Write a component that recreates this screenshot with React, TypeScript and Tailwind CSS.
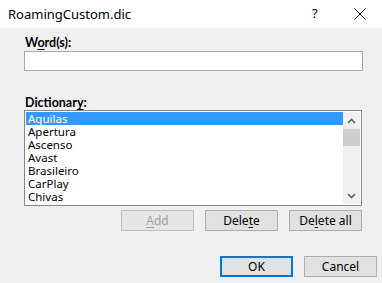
import React from "react";

const font = { fontFamily: '"Noto Sans", "Open Sans", sans-serif' };
const boldFont = { fontFamily: 'Lato, "Noto Sans", sans-serif' };

function Btn({ children, disabled, primary, className = "" }: { children: React.ReactNode; disabled?: boolean; primary?: boolean; className?: string }) {
  return (
    <div
      className={`h-[21px] w-[73px] flex items-center justify-center text-[12px] leading-none ${
        primary
          ? "border-2 border-[#0078d7] bg-[#e1e1e1] text-black"
          : disabled
          ? "border border-[#bfbfbf] bg-[#e6e6e6] text-[#a0a0a0]"
          : "border border-[#adadad] bg-[#e1e1e1] text-black"
      } ${className}`}
    >
      {children}
    </div>
  );
}

const items = ["Aguilas", "Apertura", "Ascenso", "Avast", "Brasileiro", "CarPlay", "Chivas"];

export default function App() {
  return (
    <div className="w-[382px] h-[283px] bg-[#f0f0f0] flex flex-col overflow-hidden text-black" style={font}>
      <div className="h-[28px] bg-white flex items-center pl-[8px] relative shrink-0">
        <span className="text-[13px] leading-none">RoamingCustom.dic</span>
        <span className="absolute left-[312px] top-[7px] text-[13px] leading-none">?</span>
        <svg className="absolute left-[354px] top-[8px]" width="12" height="12" viewBox="0 0 12 12">
          <path d="M0.5 0.5 L11.5 11.5 M11.5 0.5 L0.5 11.5" stroke="#111" strokeWidth="1" />
        </svg>
      </div>
      <div className="flex flex-col pl-[24px]">
        <div className="mt-[7px] h-[16px] text-[12.5px] font-bold leading-[16px] pl-[1px]" style={boldFont}>
          W<span className="underline underline-offset-2">o</span>rd(s):
        </div>
        <div className="h-[20px] w-[339px] border border-[#a8a8a8] bg-white" />
        <div className="mt-[24px] h-[15px] text-[12.5px] font-bold leading-[15px] pl-[1px]" style={boldFont}>
          Dictionar<span className="underline underline-offset-2">y</span>:
        </div>
        <div className="h-[96px] w-[338px] border border-[#828790] bg-white flex p-[1px]">
          <div className="flex-1 flex flex-col">
            {items.map((it, i) => (
              <div
                key={it}
                className={`h-[13px] text-[11.5px] leading-[13px] pl-[2px] ${i === 0 ? "bg-[#3399ff] text-white" : ""}`}
              >
                {it}
              </div>
            ))}
          </div>
          <div className="w-[17px] bg-[#f0f0f0] flex flex-col">
            <div className="h-[17px] flex items-center justify-center">
              <svg width="9" height="6" viewBox="0 0 9 6">
                <path d="M1 5 L4.5 1.5 L8 5" stroke="#606060" strokeWidth="1.6" fill="none" />
              </svg>
            </div>
            <div className="h-[17px] bg-[#cdcdcd]" />
            <div className="flex-1" />
            <div className="h-[17px] flex items-center justify-center">
              <svg width="9" height="6" viewBox="0 0 9 6">
                <path d="M1 1 L4.5 4.5 L8 1" stroke="#606060" strokeWidth="1.6" fill="none" />
              </svg>
            </div>
          </div>
        </div>
        <div className="mt-[4px] flex gap-[11px] pl-[97px]">
          <Btn disabled>
            <span className="underline underline-offset-2">A</span>dd
          </Btn>
          <Btn>
            Dele<span className="underline underline-offset-2">t</span>e
          </Btn>
          <Btn>
            De<span className="underline underline-offset-2">l</span>ete all
          </Btn>
        </div>
        <div className="mt-[25px] flex gap-[11px] pl-[196px]">
          <Btn primary>OK</Btn>
          <Btn>Cancel</Btn>
        </div>
      </div>
    </div>
  );
}
